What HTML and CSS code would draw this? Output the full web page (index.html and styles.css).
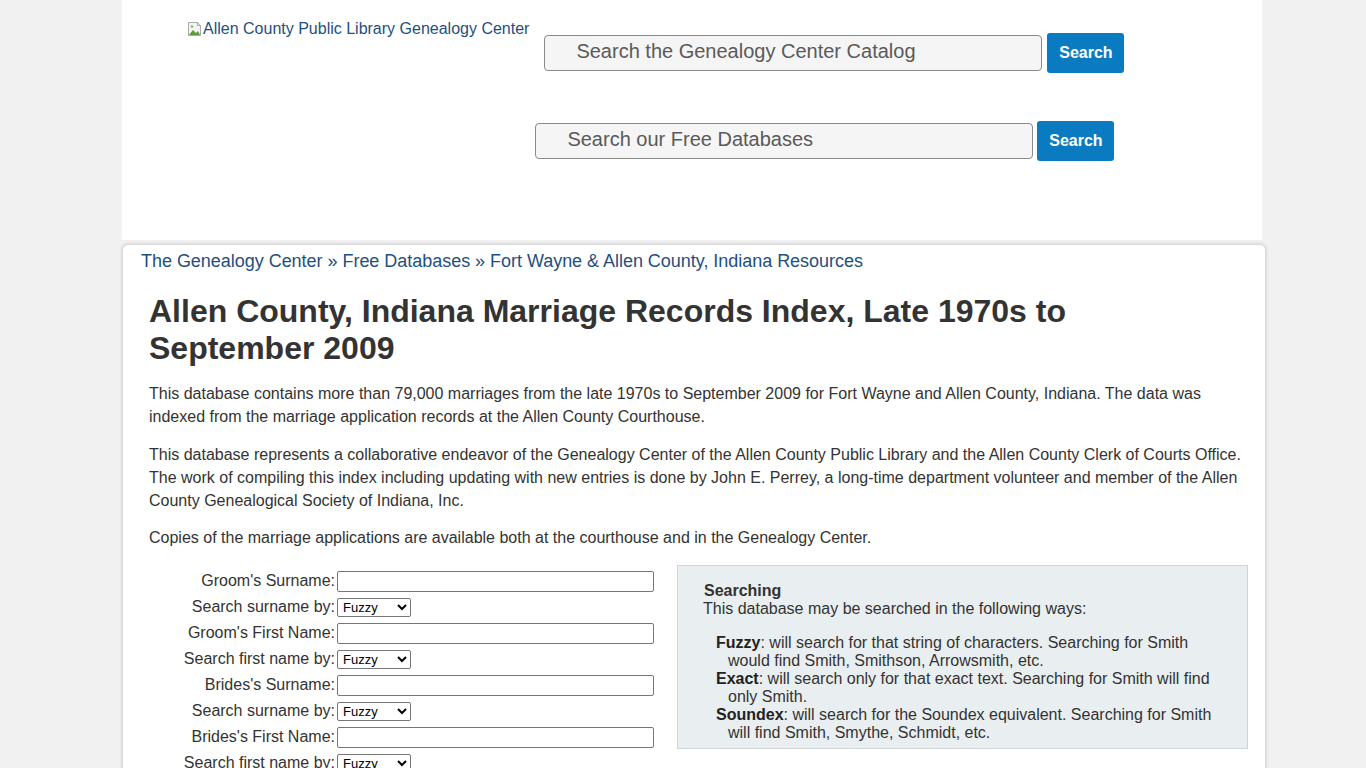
FILE: index.html
```html
<!DOCTYPE html>
<html>
<head>
<meta charset="utf-8">
<title>Allen County, Indiana Marriage Records Index</title>
<link rel="stylesheet" href="styles.css">
</head>
<body>
<div class="page">
  <header class="header">
    <a class="logo" href="#">
      <svg class="broken" width="16" height="16" viewBox="0 0 16 16">
        <path d="M1.5 1.5h9l3 3v10h-12z" fill="#f4f4f4" stroke="#a9a9a9"/>
        <path d="M10.5 1.5v3h3" fill="none" stroke="#a9a9a9"/>
        <path d="M2 14l4-5 3 3 2-2 2 4z" fill="#5a9e3a"/>
        <circle cx="5" cy="5.5" r="1.3" fill="#7bbf55"/>
      </svg><span>Allen County Public Library Genealogy Center</span>
    </a>
    <div class="searches">
      <form class="search-row first">
        <input class="search-input" type="text" placeholder="Search the Genealogy Center Catalog">
        <button class="search-btn" type="button">Search</button>
      </form>
      <form class="search-row">
        <input class="search-input" type="text" placeholder="Search our Free Databases">
        <button class="search-btn" type="button">Search</button>
      </form>
    </div>
  </header>

  <main class="main">
    <nav class="crumbs">
      <a href="#">The Genealogy Center</a> » <a href="#">Free Databases</a> » <a href="#">Fort Wayne &amp; Allen County, Indiana Resources</a>
    </nav>
    <div class="content">
      <h1>Allen County, Indiana Marriage Records Index, Late 1970s to September 2009</h1>
      <p>This database contains more than 79,000 marriages from the late 1970s to September 2009 for Fort Wayne and Allen County, Indiana. The data was indexed from the marriage application records at the Allen County Courthouse.</p>
      <p>This database represents a collaborative endeavor of the Genealogy Center of the Allen County Public Library and the Allen County Clerk of Courts Office. The work of compiling this index including updating with new entries is done by John E. Perrey, a long-time department volunteer and member of the Allen County Genealogical Society of Indiana, Inc.</p>
      <p>Copies of the marriage applications are available both at the courthouse and in the Genealogy Center.</p>

      <div class="search-area">
        <form class="fields">
          <label>Groom's Surname:</label><input class="text" type="text">
          <label>Search surname by:</label><select class="sel"><option>Fuzzy</option><option>Exact</option><option>Soundex</option></select>
          <label>Groom's First Name:</label><input class="text" type="text">
          <label>Search first name by:</label><select class="sel"><option>Fuzzy</option><option>Exact</option><option>Soundex</option></select>
          <label>Brides's Surname:</label><input class="text" type="text">
          <label>Search surname by:</label><select class="sel"><option>Fuzzy</option><option>Exact</option><option>Soundex</option></select>
          <label>Brides's First Name:</label><input class="text" type="text">
          <label>Search first name by:</label><select class="sel"><option>Fuzzy</option><option>Exact</option><option>Soundex</option></select>
        </form>
        <aside class="info">
          <div class="info-title">Searching</div>
          <div class="info-lead">This database may be searched in the following ways:</div>
          <ul class="ways">
            <li><b>Fuzzy</b>: will search for that string of characters. Searching for Smith would find Smith, Smithson, Arrowsmith, etc.</li>
            <li><b>Exact</b>: will search only for that exact text. Searching for Smith will find only Smith.</li>
            <li><b>Soundex</b>: will search for the Soundex equivalent. Searching for Smith will find Smith, Smythe, Schmidt, etc.</li>
          </ul>
        </aside>
      </div>
    </div>
  </main>
</div>
</body>
</html>
```

FILE: styles.css
```css
html, body {
  margin: 0;
  padding: 0;
  background: #f1f1f1;
  font-family: "Liberation Sans", Arial, sans-serif;
  color: #333;
}

a {
  color: #1f4f80;
  text-decoration: none;
}

.page {
  width: 1144px;
  margin-left: 122px;
}

.header {
  width: 1140px;
  height: 240px;
  background: #fff;
  display: flex;
  align-items: flex-start;
  box-sizing: border-box;
  padding-left: 65px;
}

.logo {
  display: flex;
  align-items: center;
  margin-top: 20px;
  font-size: 16px;
  line-height: 17px;
}

.broken {
  flex: none;
}

.searches {
  margin-left: 6px;
  margin-top: 33px;
  display: flex;
  flex-direction: column;
  gap: 48px;
}

.search-row {
  display: flex;
  align-items: center;
  margin: 0;
}

.search-row.first {
  margin-left: 9px;
}

.search-input {
  width: 498px;
  height: 36px;
  box-sizing: border-box;
  border: 1px solid #8a8a8a;
  border-radius: 4px;
  background: #f5f5f5;
  padding: 0 0 3px 31px;
  font-family: "Liberation Sans", Arial, sans-serif;
  font-size: 20px;
  color: #333;
}

.search-input::placeholder {
  color: #5a5a5a;
}

.search-btn {
  margin-left: 5px;
  width: 77px;
  height: 40px;
  border: none;
  border-radius: 3px;
  background: #0b7bc1;
  color: #fff;
  font-family: "Liberation Sans", Arial, sans-serif;
  font-weight: bold;
  font-size: 16px;
  padding: 0;
}

.search-row + .search-row .search-btn {
  margin-left: 4px;
}

.main {
  margin-top: 4px;
  background: #fff;
  border: 1px solid #dcdcdc;
  border-radius: 6px;
  box-shadow: 0 0 3px rgba(0,0,0,0.18);
  padding: 5px 18px 30px 18px;
  min-height: 600px;
}

.crumbs {
  font-size: 18px;
  line-height: 22px;
  color: #1f4f80;
  letter-spacing: -0.03px;
}

.content {
  padding: 0 0 0 8px;
}

h1 {
  margin: 21px 0 15px 0;
  padding-right: 100px;
  font-size: 32px;
  line-height: 37px;
  font-weight: bold;
  color: #333;
}

p {
  margin: 0 0 14.5px 0;
  font-size: 16px;
  line-height: 23px;
  color: #333;
}

.search-area {
  display: flex;
  align-items: flex-start;
  margin-top: 16px;
}

.fields {
  display: grid;
  grid-template-columns: 186px 318px;
  grid-auto-rows: 26px;
  column-gap: 2px;
  align-items: center;
  margin: 3px 0 0 0;
  width: 506px;
  flex: none;
}

.fields label {
  text-align: right;
  font-size: 16px;
  color: #333;
}

.text {
  width: 317px;
  height: 21px;
  box-sizing: border-box;
  border: 1px solid #767676;
  border-radius: 2px;
  background: #fff;
  padding: 0 3px;
}

.sel {
  width: 74px;
  height: 19px;
  box-sizing: border-box;
  font-family: "Liberation Sans", Arial, sans-serif;
  font-size: 13px;
  border: 1px solid #767676;
  border-radius: 2px;
  background: #fff;
  padding: 0 0 0 1px;
  justify-self: start;
}

.info {
  margin-left: 22px;
  width: 571px;
  flex: none;
  box-sizing: border-box;
  background: #e9eef0;
  border: 1px solid #cfd4d6;
  padding: 16px 20px 6px 26px;
  font-size: 16px;
  line-height: 18px;
  color: #333;
}

.info-title {
  font-weight: bold;
}

.info-lead {
  margin-left: -1px;
}

.ways {
  list-style: none;
  margin: 16px 0 0 0;
  padding: 0 0 0 12px;
}

.ways li {
  padding-left: 12px;
  text-indent: -12px;
}

.ways b {
  color: #222;
}
```
